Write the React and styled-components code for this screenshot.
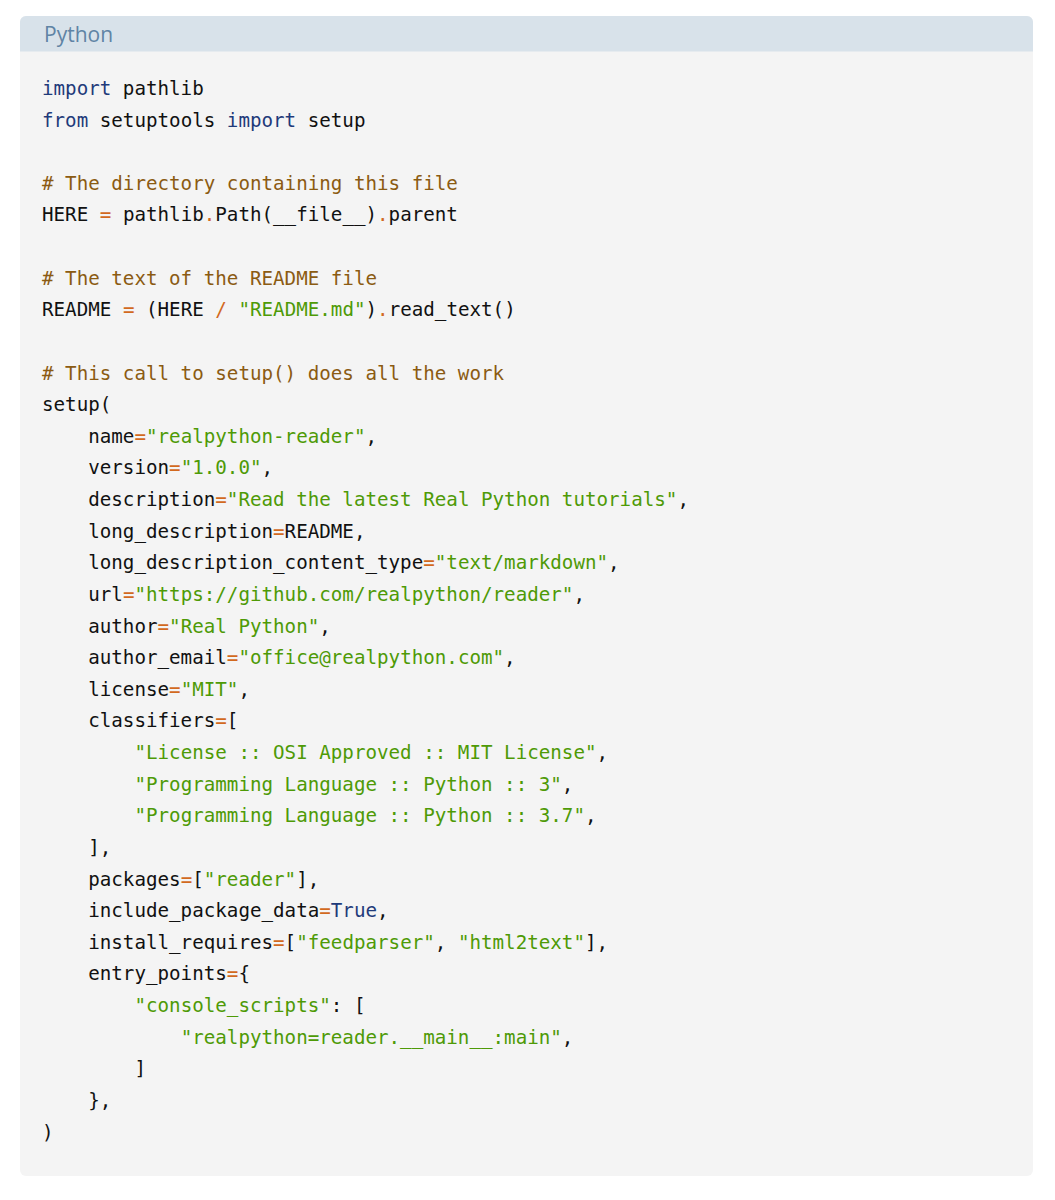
import React from "react";
import styled, { createGlobalStyle } from "styled-components";

const Global = createGlobalStyle`
  html, body { margin: 0; padding: 0; background: #ffffff; }
  body { font-family: "Open Sans", "Liberation Sans", sans-serif; }
`;

const Block = styled.div`
  margin: 16px 22px 24px 20px;
  background: #f4f4f4;
  border-radius: 6px;
  overflow: hidden;
`;

const Header = styled.div`
  height: 35px;
  background: #d8e2ea;
  display: flex;
  align-items: center;
  padding-left: 24px;
  font-family: "Open Sans", "Liberation Sans", sans-serif;
  font-size: 21px;
  color: #5f84a5;
  border-bottom: 1px solid #e6ebef;
`;

const Pre = styled.pre`
  margin: 0;
  padding: 21px 22px 28px 22px;
  font-family: "DejaVu Sans Mono", "Liberation Mono", monospace;
  font-size: 19.2px;
  line-height: 31.62px;
  color: #111111;
  white-space: pre;
`;

const Line = styled.div`
  min-height: 31.62px;
`;

const colors = {
  k: "#1f3a7a",
  c: "#8b5b12",
  o: "#d2691e",
  s: "#4e9a06",
  p: "#111111",
};

const Tok = styled.span`
  color: ${(p) => colors[p.$t]};
`;

const lines = [
  [["k", "import"], ["p", " pathlib"]],
  [["k", "from"], ["p", " setuptools "], ["k", "import"], ["p", " setup"]],
  [],
  [["c", "# The directory containing this file"]],
  [["p", "HERE "], ["o", "="], ["p", " pathlib"], ["o", "."], ["p", "Path(__file__)"], ["o", "."], ["p", "parent"]],
  [],
  [["c", "# The text of the README file"]],
  [["p", "README "], ["o", "="], ["p", " (HERE "], ["o", "/"], ["p", " "], ["s", "\"README.md\""], ["p", ")"], ["o", "."], ["p", "read_text()"]],
  [],
  [["c", "# This call to setup() does all the work"]],
  [["p", "setup("]],
  [["p", "    name"], ["o", "="], ["s", "\"realpython-reader\""], ["p", ","]],
  [["p", "    version"], ["o", "="], ["s", "\"1.0.0\""], ["p", ","]],
  [["p", "    description"], ["o", "="], ["s", "\"Read the latest Real Python tutorials\""], ["p", ","]],
  [["p", "    long_description"], ["o", "="], ["p", "README,"]],
  [["p", "    long_description_content_type"], ["o", "="], ["s", "\"text/markdown\""], ["p", ","]],
  [["p", "    url"], ["o", "="], ["s", "\"https://github.com/realpython/reader\""], ["p", ","]],
  [["p", "    author"], ["o", "="], ["s", "\"Real Python\""], ["p", ","]],
  [["p", "    author_email"], ["o", "="], ["s", "\"office@realpython.com\""], ["p", ","]],
  [["p", "    license"], ["o", "="], ["s", "\"MIT\""], ["p", ","]],
  [["p", "    classifiers"], ["o", "="], ["p", "["]],
  [["p", "        "], ["s", "\"License :: OSI Approved :: MIT License\""], ["p", ","]],
  [["p", "        "], ["s", "\"Programming Language :: Python :: 3\""], ["p", ","]],
  [["p", "        "], ["s", "\"Programming Language :: Python :: 3.7\""], ["p", ","]],
  [["p", "    ],"]],
  [["p", "    packages"], ["o", "="], ["p", "["], ["s", "\"reader\""], ["p", "],"]],
  [["p", "    include_package_data"], ["o", "="], ["k", "True"], ["p", ","]],
  [["p", "    install_requires"], ["o", "="], ["p", "["], ["s", "\"feedparser\""], ["p", ", "], ["s", "\"html2text\""], ["p", "],"]],
  [["p", "    entry_points"], ["o", "="], ["p", "{"]],
  [["p", "        "], ["s", "\"console_scripts\""], ["p", ": ["]],
  [["p", "            "], ["s", "\"realpython=reader.__main__:main\""], ["p", ","]],
  [["p", "        ]"]],
  [["p", "    },"]],
  [["p", ")"]],
];

export default function App() {
  return (
    <>
      <Global />
      <Block>
        <Header>Python</Header>
        <Pre>
          {lines.map((toks, i) => (
            <Line key={i}>
              {toks.map(([t, text], j) => (
                <Tok key={j} $t={t}>
                  {text}
                </Tok>
              ))}
            </Line>
          ))}
        </Pre>
      </Block>
    </>
  );
}
